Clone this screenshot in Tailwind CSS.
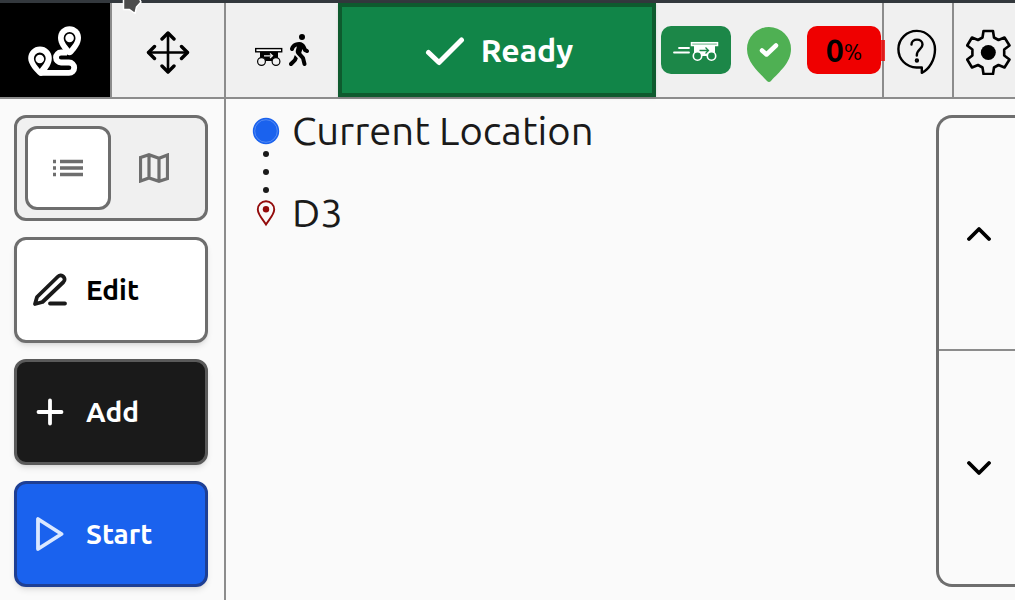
<!DOCTYPE html>
<html lang="en">
<head>
<meta charset="utf-8">
<meta name="viewport" content="width=device-width, initial-scale=1">
<title>Route</title>
<script src="https://cdn.jsdelivr.net/npm/@tailwindcss/browser@4"></script>
</head>
<body class="relative flex h-screen flex-col overflow-hidden bg-[#fafafa] font-['Ubuntu','Noto_Sans',sans-serif] text-[#1a1a1a]">
<div class="h-[3px] shrink-0 bg-[#33383d]"></div>
<svg class="absolute top-0 left-[120px]" width="24" height="16" viewBox="120 0 24 16" aria-hidden="true"><path d="M123.500-2V9.500H129.500L135 13.500L136.500 7L141 2L139-2Z" fill="#4d4d4d" stroke="#fff" stroke-width="1.500" stroke-linejoin="round"/></svg>

<header class="flex h-24 shrink-0 border-b-2 border-[#8c8c8c] bg-[#f0f0f0] text-black">
  <button aria-label="Route" class="flex w-28 shrink-0 items-center justify-center border-r-2 border-[#8c8c8c] bg-black pt-0.5">
    <svg width="54" height="52" viewBox="28 25 54 52" fill="none">
      <path d="M67 52.500H61a5 5 0 0 0 0 10H69a5.200 5.200 0 0 1 0 10.400H40" stroke="#fff" stroke-width="5.800"/>
      <path d="M69.500 26.200a11.500 11.500 0 0 1 11.500 11.500c0 6-4.500 12-8.500 16.300q-3 2.500-6 0C62.500 49.700 58 43.700 58 37.700A11.500 11.500 0 0 1 69.500 26.200Z" fill="#fff"/>
      <path d="M40 46.500A11.800 11.800 0 0 1 51.800 58.300c0 6-4 11-6.800 14L42 75.800H39.500C35 72 28.200 64.500 28.200 58.300A11.800 11.800 0 0 1 40 46.500Z" fill="#fff"/>
      <path d="M69.600 32a5.900 5.900 0 0 1 5.900 5.900c0 4-3.600 7.600-5.900 10.800c-2.300-3.200-5.900-6.800-5.900-10.800A5.900 5.900 0 0 1 69.600 32ZM39.800 52.400a5.900 5.900 0 0 1 5.900 5.900c0 4-3.600 7.600-5.900 10.800c-2.300-3.200-5.900-6.800-5.900-10.800A5.900 5.900 0 0 1 39.800 52.400Z" fill="#000"/>
      <circle cx="69.600" cy="38" r="4.300" fill="#fff"/><circle cx="39.800" cy="59" r="4.300" fill="#fff"/>
    </svg>
  </button>
  <button aria-label="Move" class="flex w-[114px] shrink-0 items-center justify-center border-r-2 border-[#8c8c8c] pt-1">
    <svg width="44" height="44" viewBox="0 0 44 44" fill="none" stroke="#000" stroke-linecap="round" stroke-linejoin="round"><path d="M22 3V42M2.500 22.500H41.500" stroke-width="2.600"/><path d="M16 9L22 3L28 9M16 36L22 42L28 36M8.500 16.500L2.500 22.500L8.500 28.500M35.500 16.500L41.500 22.500L35.500 28.500" stroke-width="3.400"/></svg>
  </button>
  <button aria-label="Follow" class="flex w-28 shrink-0 items-center justify-center gap-1.5">
    <svg width="28" height="32" viewBox="255 34 28 32" fill="none"><path d="M260 51.500H278V58L274 61H264L260 58Z" fill="#000"/><rect x="255.700" y="48.600" width="26" height="3.200" fill="#fff" stroke="#000" stroke-width="1.400"/><path d="M264 55.800H272.500M270 53.500L272.500 55.800L270 58" stroke="#f0f0f0" stroke-width="1.200"/><circle cx="261.500" cy="61.500" r="3.900" fill="#f0f0f0" stroke="#000" stroke-width="1.200"/><circle cx="276" cy="61.500" r="3.900" fill="#f0f0f0" stroke="#000" stroke-width="1.200"/></svg>
    <svg width="20" height="32" viewBox="0 0 320 512"><path d="M160 48a48 48 0 1 1 96 0 48 48 0 1 1-96 0zM126.500 199.300c-1 .4-1.900 .8-2.900 1.200l-8 3.500c-16.400 7.300-29 21.200-34.700 38.200l-2.600 7.800c-5.600 16.800-23.700 25.800-40.500 20.200s-25.800-23.700-20.200-40.500l2.600-7.800c11.400-34.100 36.600-61.900 69.400-76.500l8-3.500c20.800-9.200 43.300-14 66.100-14c44.600 0 84.800 26.800 101.900 67.900L281 232.700l21.400 10.700c15.800 7.900 22.200 27.100 14.300 42.900s-27.100 22.200-42.900 14.300L247 287.300c-10.300-5.200-18.400-13.800-22.800-24.500l-9.600-23-19.300 65.500 49.500 54c5.400 5.900 9.200 13 11.200 20.800l23 92.100c4.300 17.100-6.100 34.500-23.300 38.800s-34.500-6.100-38.800-23.300l-22-88.100-70.700-77.100c-14.800-16.100-20.300-38.600-14.700-59.700l16.900-63.500zM68.700 398l25-62.400c2.100 3 4.500 5.800 7 8.600l40.700 44.400-14.500 36.200c-2.400 6-6 11.500-10.600 16.100L54.600 502.600c-12.500 12.500-32.800 12.500-45.300 0s-12.500-32.800 0-45.300L68.700 398z"/></svg>
  </button>
  <button class="flex min-w-0 flex-1 items-center justify-center gap-4 border-4 border-[#0e5a2e] bg-[#118548] pl-1 text-[32px] leading-9 font-bold text-white shadow-sm">
    <svg class="mt-0.5" width="40" height="30" viewBox="0 0 40 30" fill="none" stroke="#fff" stroke-width="5" stroke-linecap="round" stroke-linejoin="round" aria-hidden="true"><path d="M3.500 16.500L14 26.500L36.500 4"/></svg>
    <span>Ready</span>
  </button>
  <div class="flex w-[228px] shrink-0 items-center border-r-2 border-[#8c8c8c] pl-[5px]">
    <div class="flex h-12 w-[70px] items-center justify-center rounded-[10px] bg-[#1c8748]">
      <svg width="46" height="22" viewBox="673 39 46 22" fill="none" role="img" aria-label="Cart moving"><path d="M679 48H689M674 52.500H689" stroke="#fff" stroke-width="1.800" stroke-linecap="round"/><path d="M694 46H715V53L711 56H698L694 53Z" fill="#fff"/><rect x="691.500" y="42.700" width="26" height="2.800" fill="#8ac3a0" stroke="#fff" stroke-width="1.500"/><path d="M699.500 50.500H708M705.500 47.500L708.500 50.500L705.500 53.500" stroke="#1c8748" stroke-width="1.300"/><circle cx="697.500" cy="56" r="4.200" fill="#1c8748" stroke="#fff" stroke-width="1.600"/><circle cx="711.500" cy="56" r="4.200" fill="#1c8748" stroke="#fff" stroke-width="1.600"/></svg>
    </div>
    <svg class="mt-2 ml-4" width="44" height="55" viewBox="0 0 44 55" role="img" aria-label="Localized"><path d="M22 0A22 22 0 0 1 44 22C44 36 32 45 24 54Q22 56 20 54C12 45 0 36 0 22A22 22 0 0 1 22 0Z" fill="#4fb053"/><path d="M15 23.500L19.500 27.500L29 18.500" fill="none" stroke="#fff" stroke-width="4.500" stroke-linecap="round" stroke-linejoin="round"/></svg>
    <div class="relative ml-4 flex h-12 w-[74px] items-center justify-center rounded-[10px] bg-[#ef0000]">
      <span class="text-[32px] leading-9 font-bold">0</span><span class="pt-1 text-[22px] leading-8">%</span>
      <div class="absolute top-[14px] -right-1 h-[21px] w-1 bg-[#ef0000]/80"></div>
    </div>
  </div>
  <button aria-label="Help" class="flex w-[70px] shrink-0 items-center justify-center border-r-2 border-[#8c8c8c] pt-1 pr-0.5">
    <svg width="40" height="46" viewBox="897 29 40 46" fill="none" stroke="#000" stroke-width="2.400" stroke-linecap="round" stroke-linejoin="round"><path d="M921.800 67.500V72.800C929 69.500 935 60 935 49.500A18.300 18.300 0 1 0 916.500 67.500Z"/><path d="M911.500 44.500C911.500 38 922.500 38 922.500 44.500C922.500 49.500 916.800 49 916.800 55.500"/><circle cx="916.900" cy="60.500" r="1"/></svg>
  </button>
  <button aria-label="Settings" class="flex w-[61px] shrink-0 items-center pt-1 pl-3">
    <svg class="shrink-0" width="45" height="46" viewBox="966 29 45 46"><path d="M983.500 31H993L994 37.500L998.500 40L1004.500 37.500L1009.500 45.500L1004.200 49.500V55.500L1009.500 59.500L1004.500 67.500L998.500 65L994 67.500L993 74H983.500L982.500 67.500L978 65L972 67.500L967.200 59.500L972.400 55.500V49.500L967.200 45.500L972 37.500L978 40L982.500 37.500Z" fill="none" stroke="#000" stroke-width="2.600" stroke-linejoin="round"/><circle cx="988.300" cy="52.500" r="7.500"/></svg>
  </button>
</header>

<div class="flex min-h-0 flex-1">
  <aside class="grid w-[226px] shrink-0 grid-rows-4 gap-4 border-r-2 border-[#8c8c8c] pt-4 pr-4 pb-[13px] pl-[14px] text-[28px] leading-9 font-semibold">
    <div class="grid grid-cols-2 rounded-xl border-[3px] border-[#6e6e6e] bg-[#f0f0f0] p-2">
      <button aria-label="List view" aria-pressed="true" class="flex items-center justify-center rounded-xl border-[3px] border-[#6e6e6e] bg-white">
        <svg width="30" height="18" viewBox="0 0 30 18" stroke="#6e6e6e" stroke-width="3.400"><path d="M0 2.500H3M7 2.500H30M0 9H3M7 9H30M0 15.500H3M7 15.500H30"/></svg>
      </button>
      <button aria-label="Map view" class="flex items-center justify-center">
        <svg width="30" height="30" viewBox="0 0 30 30" fill="none" stroke="#6e6e6e" stroke-width="3.200"><path d="M1.500 4.500L10 1.800L20 5.200L28.500 2V25.500L20 28.300L10 24.900L1.500 28ZM10 1.800V25M20 5V28"/></svg>
      </button>
    </div>
    <button class="flex items-center gap-[18px] rounded-xl border-[3px] border-[#6e6e6e] bg-white pl-4 text-black shadow-md">
      <svg width="35" height="34" viewBox="0 0 35 34" fill="none" stroke="#1a1a1a" stroke-width="3.800" stroke-linecap="round" stroke-linejoin="round" aria-hidden="true"><path d="M2 31L4 24L25 3.500C28.500 0 34 5.500 30.500 9L9.500 29ZM17 30.500H32"/></svg>
      <span>Edit</span>
    </button>
    <button class="flex items-center gap-[18px] rounded-xl border-[3px] border-[#5a5a5a] bg-[#1a1a1a] pl-4 text-white shadow-md">
      <svg width="35" height="34" viewBox="0 0 35 34" fill="none" stroke="#fff" stroke-width="3.800" stroke-linecap="round" aria-hidden="true"><path d="M17 5.500V28.500M5.500 17H28.500"/></svg>
      <span>Add</span>
    </button>
    <button class="flex items-center gap-[18px] rounded-xl border-[3px] border-[#1e3f94] bg-[#1a62ee] pl-4 text-white shadow-md">
      <svg width="35" height="34" viewBox="0 0 35 34" fill="none" stroke="#dbe8ff" stroke-width="3.800" stroke-linejoin="round" aria-hidden="true"><path d="M5 2V32L28.500 17Z"/></svg>
      <span>Start</span>
    </button>
  </aside>

  <main class="flex min-w-0 flex-1 pt-4 pb-[13px]">
    <ol class="min-w-0 flex-1 pl-[26px] text-[40px] leading-8">
      <li class="flex items-center gap-3">
        <svg class="shrink-0" width="28" height="28" viewBox="0 0 28 28" aria-hidden="true"><circle cx="14" cy="14" r="13.200" fill="#1a62ee"/><circle cx="14" cy="14" r="11.300" fill="none" stroke="#8fb2f7" stroke-width=".5"/></svg>
        <span>Current Location</span>
      </li>
      <li class="h-[50px] w-7 pt-1" aria-hidden="true"><svg width="28" height="46" viewBox="0 0 28 46" fill="#1a1a1a"><circle cx="14" cy="3" r="3"/><circle cx="14" cy="21" r="3"/><circle cx="14" cy="39" r="3"/></svg></li>
      <li class="flex items-center gap-3">
        <svg class="shrink-0" width="28" height="28" viewBox="0 0 28 28" aria-hidden="true"><path d="M14 2.200A8.200 8.200 0 0 1 22.200 10.400C22.200 15.500 17 20.500 14 25.500C11 20.500 5.800 15.500 5.800 10.400A8.200 8.200 0 0 1 14 2.200Z" fill="none" stroke="#930c0c" stroke-width="1.900"/><circle cx="14" cy="10.300" r="3.200" fill="#930c0c"/></svg>
        <span>D3</span>
      </li>
    </ol>
    <div class="grid w-[79px] shrink-0 grid-rows-2 rounded-l-2xl border-[3px] border-r-0 border-[#6e6e6e]">
      <button aria-label="Scroll up" class="flex items-center border-b-2 border-[#8c8c8c] pl-7"><svg width="24" height="16" viewBox="0 0 24 16" fill="none" stroke="#000" stroke-width="3.800" stroke-linecap="round" stroke-linejoin="round"><path d="M2 13L12 3L22 13"/></svg></button>
      <button aria-label="Scroll down" class="flex items-center pl-7"><svg width="24" height="16" viewBox="0 0 24 16" fill="none" stroke="#000" stroke-width="3.800" stroke-linecap="round" stroke-linejoin="round"><path d="M2 3L12 13L22 3"/></svg></button>
    </div>
  </main>
</div>
</body>
</html>
